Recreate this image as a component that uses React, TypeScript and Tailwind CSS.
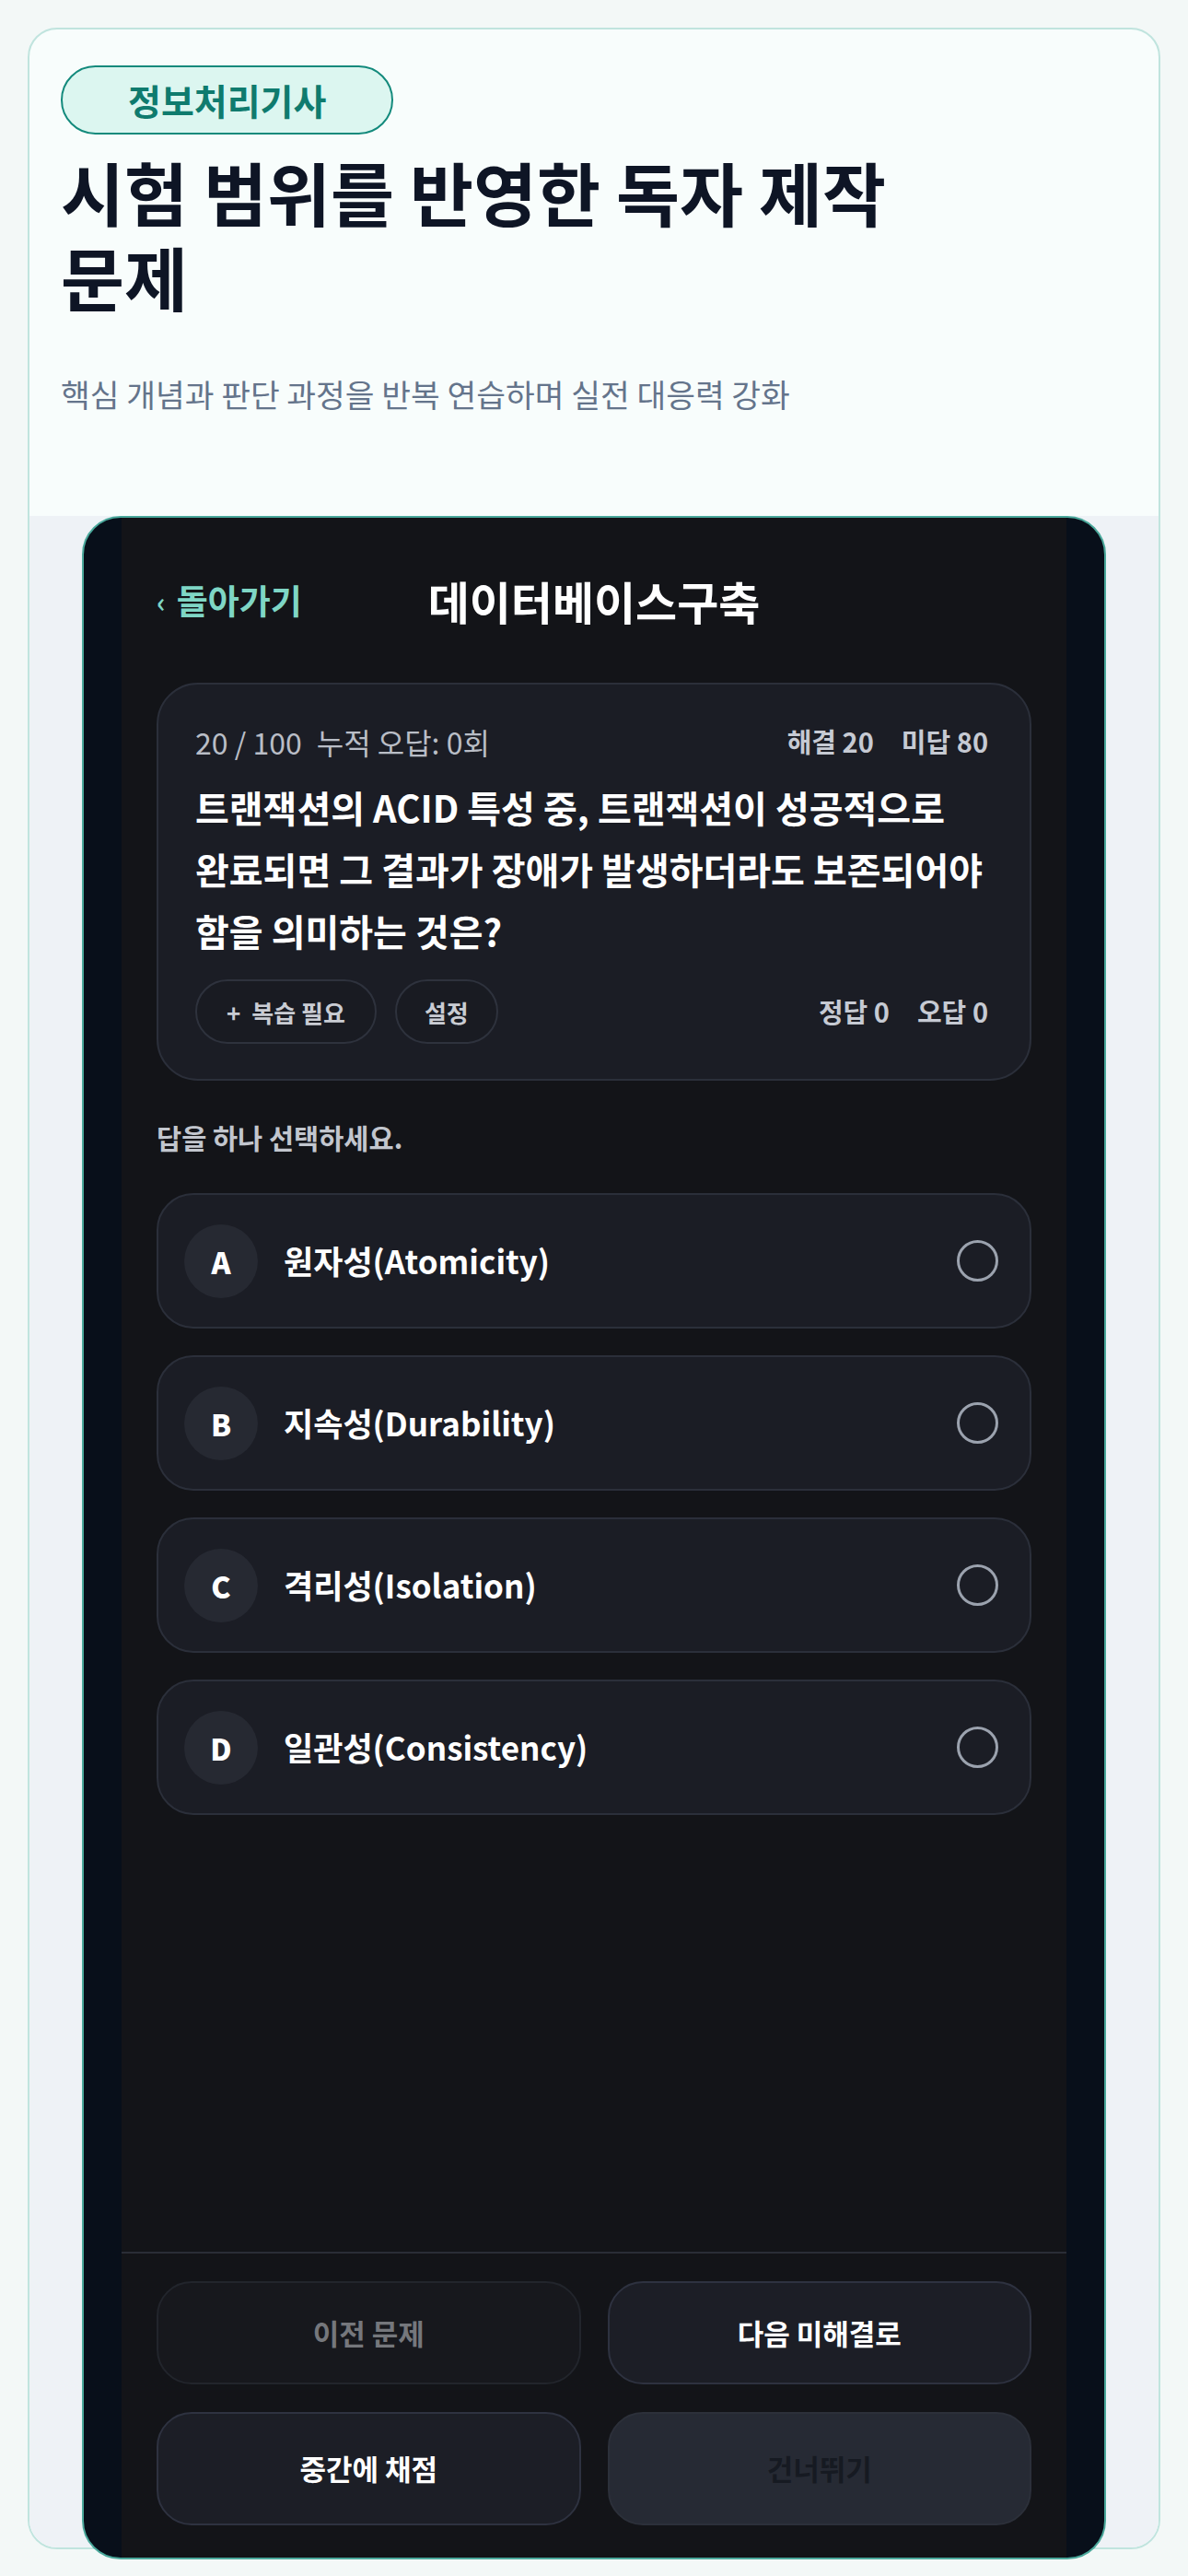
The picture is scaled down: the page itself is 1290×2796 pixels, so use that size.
import React from 'react';

const OPTIONS = [
  { key: 'A', label: '원자성(Atomicity)' },
  { key: 'B', label: '지속성(Durability)' },
  { key: 'C', label: '격리성(Isolation)' },
  { key: 'D', label: '일관성(Consistency)' },
];

const FONT = { fontFamily: '"Noto Sans CJK KR", "Noto Sans", sans-serif' };

export default function App() {
  return (
    <div className="min-h-screen bg-[#f3f8f7] p-[30px]" style={FONT}>
      <div className="flex flex-col rounded-[32px] border-2 border-[#c0e4de] bg-[#f8fdfc]">
        {/* Intro */}
        <div className="h-[528px] px-[34px] pt-[39px]">
          <div className="inline-flex h-[75px] items-center rounded-full border-2 border-[#138a7c] bg-[#dcf6f0] px-[71px] text-[39px] font-bold text-[#0f7b6e]">
            정보처리기사
          </div>
          <h1 className="mt-[16px] max-w-[960px] break-keep text-[75px] font-bold leading-[92px] text-[#0e1525]">
            시험 범위를 반영한 독자 제작 문제
          </h1>
          <p className="mt-[58px] text-[34.5px] leading-[46px] text-[#64748b]">
            핵심 개념과 판단 과정을 반복 연습하며 실전 대응력 강화
          </p>
        </div>

        {/* Preview */}
        <div className="flex rounded-b-[30px] bg-[#eef2f6] px-[57px]">
          <div className="-mb-[13px] flex h-[2218px] w-full rounded-[42px] border-2 border-[#4aa89b] bg-[#080f1a] px-[41px]">
            <div className="flex flex-1 flex-col bg-[#131418]">
              <div className="px-[38px]">
                {/* Header */}
                <div className="mt-[40px] grid h-[100px] grid-cols-[1fr_auto_1fr] items-center">
                  <div className="flex items-center gap-[12px] text-[37px] font-bold text-[#7fd6c5]">
                    <span className="text-[30px]">‹</span>
                    <span>돌아가기</span>
                  </div>
                  <div className="text-[49px] font-bold text-white">데이터베이스구축</div>
                  <div />
                </div>

                {/* Question card */}
                <div className="mt-[39px] rounded-[45px] border-2 border-[#2b2f3a] bg-[#1b1d25] px-[40px] pt-[38px] pb-[38px]">
                  <div className="flex h-[48px] items-center justify-between pr-[5px]">
                    <div className="flex items-center gap-[16px] text-[32px] text-[#b9bdc6]">
                      <span>20 / 100</span>
                      <span>누적 오답: 0회</span>
                    </div>
                    <div className="flex items-center gap-[30px] text-[29px] font-bold text-[#c6cad3]">
                      <span>해결 20</span>
                      <span>미답 80</span>
                    </div>
                  </div>
                  <p className="mt-[14px] break-keep text-[40px] font-bold leading-[67px] text-white">
                    트랜잭션의 ACID 특성 중, 트랜잭션이 성공적으로 완료되면 그 결과가 장애가 발생하더라도 보존되어야 함을 의미하는 것은?
                  </p>
                  <div className="mt-[19px] flex items-center justify-between pr-[5px]">
                    <div className="flex items-center gap-[20px]">
                      <button className="flex h-[70px] items-center gap-[12px] rounded-full border-2 border-[#2e323d] bg-[#191b22] px-[32px] text-[26px] font-bold text-[#c9ccd3]">
                        <span>+</span>
                        <span>복습 필요</span>
                      </button>
                      <button className="flex h-[70px] items-center rounded-full border-2 border-[#2e323d] bg-[#191b22] px-[30px] text-[26px] font-bold text-[#c9ccd3]">
                        설정
                      </button>
                    </div>
                    <div className="flex items-center gap-[30px] text-[29px] font-bold text-[#c6cad3]">
                      <span>정답 0</span>
                      <span>오답 0</span>
                    </div>
                  </div>
                </div>

                <p className="mt-[42px] text-[29.5px] font-bold leading-[38px] text-[#c2c6ce]">답을 하나 선택하세요.</p>

                {/* Options */}
                <div className="mt-[42px] flex flex-col gap-[29px]">
                  {OPTIONS.map(o => (
                    <div
                      key={o.key}
                      className="flex h-[147px] items-center gap-[28px] rounded-[40px] border-2 border-[#2b2f3a] bg-[#1b1d25] pl-[28px] pr-[34px]"
                    >
                      <div className="flex h-[80px] w-[80px] shrink-0 items-center justify-center rounded-full bg-[#262932] text-[32px] font-black text-white">
                        {o.key}
                      </div>
                      <span className="flex-1 text-[35px] font-bold text-white">{o.label}</span>
                      <div className="h-[45px] w-[45px] shrink-0 rounded-full border-[3px] border-[#9ba2ae]" />
                    </div>
                  ))}
                </div>
              </div>

              {/* Footer */}
              <div className="mt-auto border-t-2 border-[#2a2d36] px-[38px] pt-[30px] pb-[35px]">
                <div className="grid grid-cols-2 gap-x-[29px] gap-y-[30px]">
                  <button className="flex h-[112px] items-center justify-center rounded-[38px] border-2 border-[#22252c] bg-[#17181d] text-[31px] font-bold text-[#75777c]">
                    이전 문제
                  </button>
                  <button className="flex h-[112px] items-center justify-center rounded-[38px] border-2 border-[#2e3240] bg-[#1c1e26] text-[31px] font-bold text-white">
                    다음 미해결로
                  </button>
                  <button className="flex h-[123px] items-center justify-center rounded-[38px] border-2 border-[#2e3240] bg-[#1c1e26] text-[31px] font-bold text-white">
                    중간에 채점
                  </button>
                  <button className="flex h-[123px] items-center justify-center rounded-[38px] border-2 border-[#2c303a] bg-[#262a34] text-[31px] font-bold text-[#161a22]">
                    건너뛰기
                  </button>
                </div>
              </div>
            </div>
          </div>
        </div>
      </div>
    </div>
  );
}
